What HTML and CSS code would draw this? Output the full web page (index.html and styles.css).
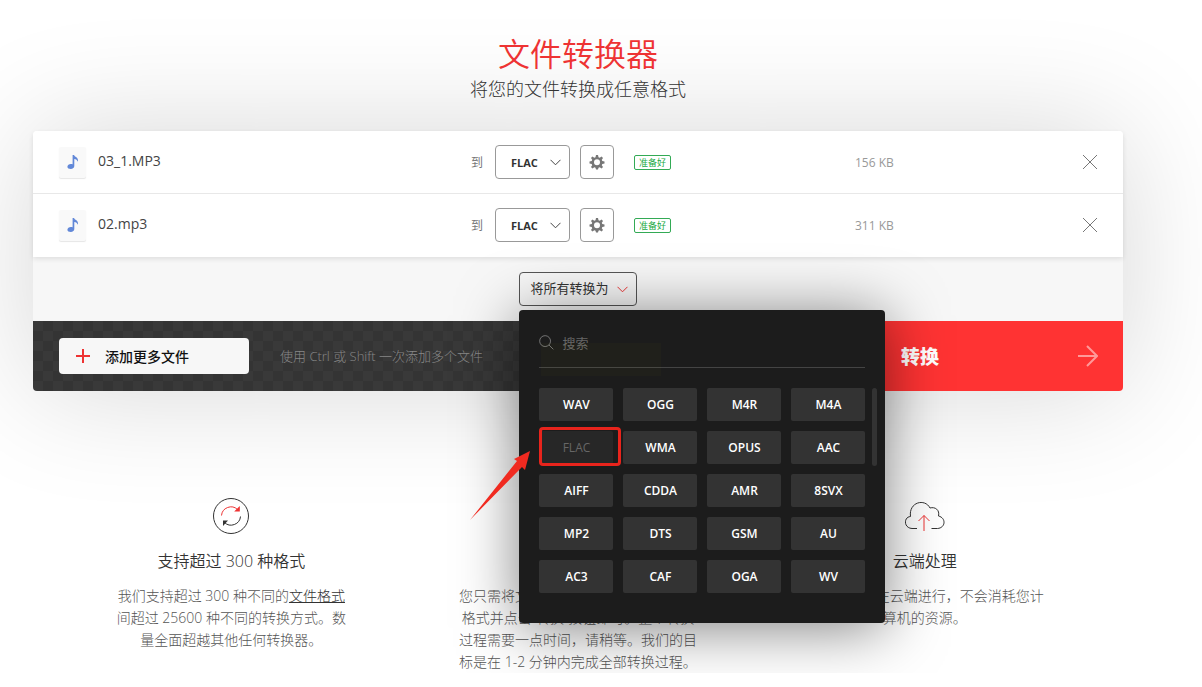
FILE: index.html
```
<!doctype html>
<html lang="zh-CN">
  <head>
    <meta charset="UTF-8" />
    <meta name="viewport" content="width=device-width, initial-scale=1.0" />
    <title>文件转换器</title>
    <link rel="stylesheet" href="styles.css">
  </head>

  <body>
    <svg class="sprite" aria-hidden="true">
      <symbol id="icon-note" viewBox="0 0 12 16">
        <path d="M5.600 1h1.400c.3 1.700 4.800 2.200 4 6.800-.8-1.600-2-2.500-3.700-2.700v7c0 1.700-1.500 2.900-3.500 2.900C1.900 15 .4 14.200.4 12.800c0-1.600 1.600-2.800 3.500-2.800.6 0 1.200.1 1.700.3z" />
      </symbol>
      <symbol id="icon-gear" viewBox="0 0 16 16">
        <path fill-rule="evenodd" d="M7 1h2l.5 2.200 1.200.5 1.900-1.200 1.400 1.400-1.200 1.900.5 1.200 2.200.5v2l-2.200.5-.5 1.200 1.200 1.900-1.400 1.400-1.900-1.200-1.200.5L9 15.500H7l-.5-1.700-1.200-.5-1.900 1.200L2 13.100l1.200-1.900L2.700 10 .5 9.500v-2L2.700 7l.5-1.200L2 3.900l1.400-1.400 1.900 1.200 1.200-.5zM8 5.300a3 3 0 1 0 0 6 3 3 0 0 0 0-6z" />
      </symbol>
      <symbol id="icon-close" viewBox="0 0 14 14">
        <path d="M0 0l14 14M14 0L0 14" />
      </symbol>
    </svg>

    <main class="page">
      <header class="header">
        <h1>文件转换器</h1>
        <p>将您的文件转换成任意格式</p>
      </header>

      <section class="converter">
        <ul class="file-list">
          <li class="file">
            <div class="file-name">
              <span class="file-icon"><svg><use href="#icon-note" /></svg></span>
              <span class="file-title">03_1.MP3</span>
            </div>
            <div class="file-format">
              <label for="format-1">到</label>
              <select id="format-1">
                <option>FLAC</option>
              </select>
              <button class="settings" aria-label="设置"><svg><use href="#icon-gear" /></svg></button>
            </div>
            <div><span class="status">准备好</span></div>
            <div class="file-size">156 KB</div>
            <button class="remove" aria-label="删除"><svg><use href="#icon-close" /></svg></button>
          </li>
          <li class="file">
            <div class="file-name">
              <span class="file-icon"><svg><use href="#icon-note" /></svg></span>
              <span class="file-title">02.mp3</span>
            </div>
            <div class="file-format">
              <label for="format-2">到</label>
              <select id="format-2">
                <option>FLAC</option>
              </select>
              <button class="settings" aria-label="设置"><svg><use href="#icon-gear" /></svg></button>
            </div>
            <div><span class="status">准备好</span></div>
            <div class="file-size">311 KB</div>
            <button class="remove" aria-label="删除"><svg><use href="#icon-close" /></svg></button>
          </li>
        </ul>

        <div class="convert-all">
          <div class="dropdown">
            <button class="dropdown-toggle" aria-expanded="true">
              <span>将所有转换为</span>
              <svg viewBox="0 0 11 7"><path d="M.5.8l5 5 5-5" /></svg>
            </button>

            <div class="menu">
              <div class="search">
                <svg viewBox="0 0 16 16"><circle cx="6.500" cy="6.500" r="5.800" /><path d="M10.700 10.700l4.600 4.600" /></svg>
                <input type="text" placeholder="搜索" aria-label="搜索" />
              </div>
              <div class="formats">
                <button>WAV</button>
                <button>OGG</button>
                <button>M4R</button>
                <button>M4A</button>
                <button disabled>FLAC</button>
                <button>WMA</button>
                <button>OPUS</button>
                <button>AAC</button>
                <button>AIFF</button>
                <button>CDDA</button>
                <button>AMR</button>
                <button>8SVX</button>
                <button>MP2</button>
                <button>DTS</button>
                <button>GSM</button>
                <button>AU</button>
                <button>AC3</button>
                <button>CAF</button>
                <button>OGA</button>
                <button>WV</button>
              </div>
              <span class="scrollbar"></span>
              <span class="tint"></span>
              <span class="marker"></span>
              <svg class="arrow" viewBox="0 0 60 70"><path d="M0 70L47 11 44 9 60 1 55 20 52 17z" /></svg>
            </div>
          </div>
        </div>

        <div class="actions">
          <div class="add">
            <button class="add-button">
              <svg viewBox="0 0 14 14"><path d="M7 0v14M0 7h14" /></svg>
              添加更多文件
            </button>
            <span class="hint">使用 Ctrl 或 Shift 一次添加多个文件</span>
          </div>
          <button class="convert-button">
            转换
            <svg viewBox="0 0 20 22"><path d="M0 11h19M9 1l10 10L9 21" /></svg>
          </button>
        </div>
      </section>

      <section class="features">
        <article class="feature">
          <svg viewBox="0 0 40 38">
            <circle cx="20" cy="19" r="17.500" />
            <path class="red" d="M10.500 18.500a9.500 9.500 0 0 1 16-6" />
            <path class="red-fill" d="M28.800 9v5.400h-5.600z" />
            <path d="M29.500 19.500a9.500 9.500 0 0 1-16 6" />
            <path class="dark-fill" d="M12 29v-5.400h5z" />
          </svg>
          <h2>支持超过 300 种格式</h2>
          <p>我们支持超过 300 种不同的<a href="#">文件格式</a>间超过 25600 种不同的转换方式。数量全面超越其他任何转换器。</p>
        </article>
        <article class="feature">
          <svg viewBox="0 0 40 38">
            <circle cx="20" cy="19" r="17.500" />
            <path class="red" d="M20 9v10l6 5" />
          </svg>
          <h2>快速和简单</h2>
          <p>您只需将文件拖放到页面上，选择输出<br />格式并点击“转换”按钮即可。整个转换<br />过程需要一点时间，请稍等。我们的目<br />标是在 1-2 分钟内完成全部转换过程。</p>
        </article>
        <article class="feature">
          <svg viewBox="0 0 40 38">
            <path d="M12 31.500H7C-1.500 31-1.500 20 5.500 19.500 3.500 5 20 1 25 11c5-1.500 10 2 8.500 8 8 2 7 12-1 12.500h-6" />
            <path class="red" d="M19 34V18.500M13.500 24l5.500-5.500 5.500 5.500" />
          </svg>
          <h2>云端处理</h2>
          <p>所有转换都在云端进行，不会消耗您计算机的资源。</p>
        </article>
      </section>
    </main>
  </body>
</html>
```
FILE: styles.css
```
* {
  box-sizing: border-box;
}

body {
  margin: 0;
  background-color: #fff;
  color: #333;
  font-family: "Open Sans", "Noto Sans CJK SC", sans-serif;
  font-size: 14px;
  overflow-x: hidden;
}

h1,
h2,
p,
ul {
  margin: 0;
  padding: 0;
}

button,
input,
select {
  font-family: inherit;
  color: inherit;
  margin: 0;
  padding: 0;
  border: none;
  background: none;
}

svg {
  display: block;
  flex-shrink: 0;
}

.sprite {
  display: none;
}

.page {
  padding: 34px 79px 0 33px;
}

/* header */
.header {
  position: relative;
  z-index: 1;
  text-align: center;
  font-weight: 300;
}

.header h1 {
  font-size: 32px;
  line-height: 40px;
  font-weight: 350;
  color: #e33;
}

.header p {
  font-size: 18px;
  line-height: 30px;
}

/* converter */
.converter {
  margin-top: 27px;
  border-radius: 4px;
  box-shadow: 0 0 120px rgba(0, 0, 0, 0.16);
}

.file-list {
  position: relative;
  list-style: none;
  background-color: #fff;
  border-radius: 4px 4px 0 0;
  box-shadow: 0 2px 5px rgba(0, 0, 0, 0.1);
}

.file {
  display: grid;
  grid-template-columns: 412fr 163fr 221fr 228fr 14px;
  align-items: center;
  height: 63px;
  padding: 0 26px;
  border-bottom: 1px solid #e8e8e8;
}

.file:last-child {
  border-color: transparent;
}

.file-name {
  display: flex;
  align-items: center;
  gap: 12px;
  color: #444;
}

.file-title {
  padding-bottom: 3px;
}

.file-icon {
  display: flex;
  align-items: center;
  justify-content: center;
  width: 27px;
  height: 31px;
  background-color: #f9f9f9;
  border-radius: 2px;
  box-shadow: 0 1px 1px rgba(0, 0, 0, 0.1);
}

.file-icon svg {
  width: 12px;
  height: 16px;
  fill: #6288d8;
}

.file-format {
  display: flex;
  align-items: center;
}

.file-format label {
  width: 24px;
  font-size: 12px;
  color: #777;
}

.file-format select {
  appearance: none;
  width: 75px;
  height: 34px;
  padding-left: 15px;
  border: 1px solid #999;
  border-radius: 4px;
  background: url("data:image/svg+xml,%3Csvg xmlns='http://www.w3.org/2000/svg' width='11' height='7' fill='none' stroke='%23444'%3E%3Cpath d='M.5.8l5 5 5-5'/%3E%3C/svg%3E") no-repeat right 8px center;
  font-size: 11px;
  font-weight: 700;
}

.settings {
  display: flex;
  align-items: center;
  justify-content: center;
  width: 34px;
  height: 34px;
  margin-left: 10px;
  border: 1px solid #999;
  border-radius: 4px;
}

.settings svg {
  width: 16px;
  height: 16px;
  fill: #777;
}

.status {
  display: block;
  width: 37px;
  border: 1px solid #3a5;
  border-radius: 2px;
  font-size: 9px;
  line-height: 13px;
  text-align: center;
  color: #2a4;
}

.file-size {
  font-size: 12px;
  color: #999;
}

.remove svg {
  width: 14px;
  height: 14px;
  stroke: #777;
}

.convert-all {
  display: flex;
  justify-content: center;
  padding: 15px 0;
  background-color: #f7f7f7;
}

.dropdown {
  position: relative;
  z-index: 2;
}

.dropdown-toggle {
  display: flex;
  align-items: center;
  gap: 8px;
  height: 34px;
  padding: 0 8px 0 10px;
  border: 1px solid #555;
  border-radius: 4px;
  font-size: 13px;
}

.dropdown-toggle span {
  padding-bottom: 3px;
}

.dropdown-toggle svg {
  width: 11px;
  height: 7px;
  fill: none;
  stroke: #e33;
}

/* format menu */
.menu {
  position: absolute;
  top: 38px;
  left: 0;
  width: 366px;
  padding: 18px 20px 30px;
  background-color: #1c1c1c;
  border-radius: 4px;
  box-shadow: 0 5px 60px rgba(0, 0, 0, 0.5);
}

.search {
  display: flex;
  align-items: center;
  gap: 8px;
  height: 40px;
  margin-bottom: 20px;
  padding-bottom: 10px;
  border-bottom: 1px solid #444;
}

.search svg {
  width: 15px;
  height: 15px;
  fill: none;
  stroke: #777;
}

.search input {
  flex: 1;
  font-size: 13px;
  outline: none;
}

.search input::placeholder {
  color: #666;
}

.formats {
  display: grid;
  grid-template-columns: repeat(4, 1fr);
  gap: 10px;
}

.formats button {
  height: 33px;
  background-color: #333;
  border-radius: 2px;
  font-size: 12px;
  font-weight: 600;
  color: #fff;
}

.formats button:disabled {
  background-color: #272727;
  font-weight: 400;
  color: #666;
}

.scrollbar {
  position: absolute;
  top: 78px;
  right: 8px;
  width: 5px;
  height: 78px;
  background-color: #333;
  border-radius: 3px;
}

.tint {
  position: absolute;
  top: 33px;
  left: 22px;
  width: 120px;
  height: 33px;
  background-color: rgba(255, 255, 0, 0.02);
}

.marker {
  position: absolute;
  top: 117px;
  left: 20px;
  width: 82px;
  height: 39px;
  border: 3px solid #e8241c;
  border-radius: 4px;
}

.arrow {
  position: absolute;
  top: 140px;
  left: -49px;
  width: 60px;
  height: 70px;
  fill: #f02a20;
}

/* bottom bar */
.actions {
  display: flex;
  height: 70px;
  border-radius: 0 0 4px 4px;
  overflow: hidden;
}

.add {
  flex: 1;
  display: flex;
  align-items: center;
  gap: 31px;
  padding-left: 26px;
  background: repeating-conic-gradient(#343434 0 25%, #393939 0 50%) 0 0 / 20px 20px;
}

.add-button {
  display: flex;
  align-items: center;
  gap: 15px;
  width: 190px;
  height: 36px;
  padding-left: 17px;
  background-color: #f7f7f7;
  border-radius: 4px;
  font-size: 14px;
  font-weight: 500;
  color: #111;
}

.add-button svg {
  width: 14px;
  height: 14px;
  stroke: #e33;
  stroke-width: 2;
}

.hint {
  padding-bottom: 1px;
  font-size: 13px;
  font-weight: 300;
  color: #888;
}

.convert-button {
  display: flex;
  align-items: center;
  justify-content: space-between;
  width: 247px;
  padding: 0 25px;
  background-color: #f33;
  font-size: 19px;
  font-weight: 900;
  color: #fff;
}

.convert-button svg {
  width: 20px;
  height: 22px;
  fill: none;
  stroke: #f99;
  stroke-width: 2;
}

/* features */
.features {
  display: grid;
  grid-template-columns: repeat(3, 1fr);
  padding: 106px 25px 0;
}

.feature {
  display: flex;
  flex-direction: column;
  align-items: center;
  text-align: center;
}

.feature svg {
  width: 40px;
  height: 38px;
  fill: none;
  stroke: #333;
}

.feature .red {
  stroke: #e33;
}

.feature .red-fill {
  fill: #e33;
  stroke: none;
}

.feature .dark-fill {
  fill: #333;
  stroke: none;
}

.feature h2 {
  margin: 14px 0 12px;
  font-size: 16px;
  line-height: 24px;
  font-weight: 350;
}

.feature p {
  width: 240px;
  line-height: 22px;
  font-weight: 300;
  color: #555;
}

.feature a {
  color: #333;
}
```
